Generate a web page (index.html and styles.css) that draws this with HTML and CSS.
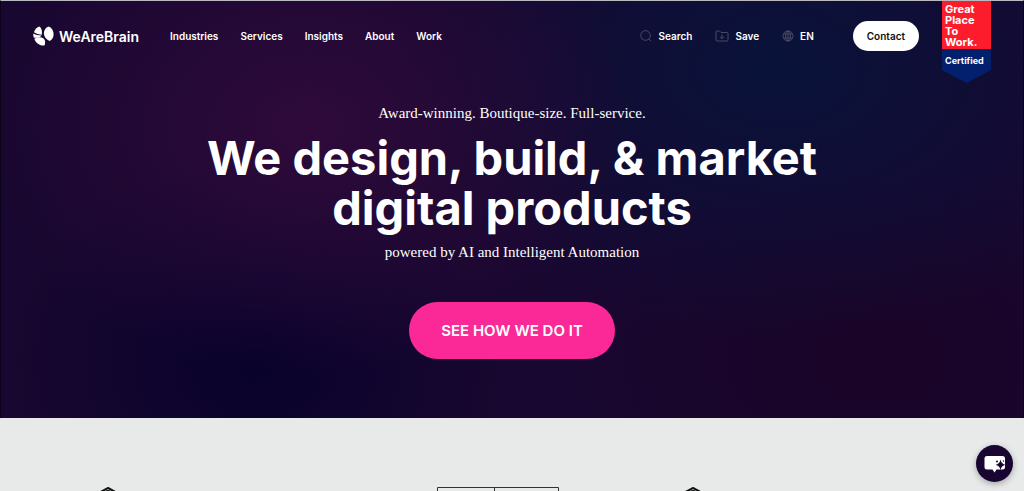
FILE: index.html
```
<!doctype html>
<html lang="en">
<head>
	<meta charset="utf-8">
	<meta name="viewport" content="width=device-width, initial-scale=1">
	<title>WeAreBrain</title>
	<link rel="stylesheet" href="styles.css">
</head>
<body>
	<div class="hero">
		<header class="header">
			<a href="#" class="logo">
				<svg width="21" height="20" viewBox="0 0 21 20" fill="#fff">
					<path d="M6.500.5C8.600 2.300 9.400 5.500 8.800 8.700C6 8.600 3 8 1 6.300C1.800 3.500 3.800 1.200 6.500.5Z"/>
					<path d="M.4 7.500C2.700 8.900 5.500 9.400 8.500 9.500C7.500 11.200 4 12.300.8 11.600C.2 10.300.1 8.900.4 7.500Z"/>
					<path d="M1.300 12.700C6 10.300 11.200 11 12 15C12.300 16.900 12 18.500 11.300 19.600C6.800 19.800 2.600 17 1.300 12.700Z"/>
					<path d="M15.700.4C19 1.800 20.700 5 20.600 8.500C20.500 11.600 19 14 16.500 15C13 13.400 10.800 10.500 10.900 7C11 4 12.800 1.300 15.700.4Z"/>
				</svg>
				<span>WeAreBrain</span>
			</a>
			<nav class="menu">
				<a href="#">Industries</a>
				<a href="#">Services</a>
				<a href="#">Insights</a>
				<a href="#">About</a>
				<a href="#">Work</a>
			</nav>
			<div class="tools">
				<button type="button" class="tool">
					<svg width="12" height="12" viewBox="0 0 12 12"><circle cx="5.500" cy="5.500" r="4.800"/><path d="M9 9l2 2"/></svg>
					Search
				</button>
				<button type="button" class="tool">
					<svg width="14" height="12" viewBox="0 0 14 12"><path d="M1 10V2Q1 1 2 1H4.500L6 2.500H12Q13 2.500 13 3.500V10Q13 11 12 11H2Q1 11 1 10ZM7 4.500V8.500M5 6.800L7 8.700L9 6.800"/></svg>
					Save
				</button>
				<button type="button" class="tool">
					<svg width="12" height="12" viewBox="0 0 12 12"><circle cx="6" cy="6" r="5"/><ellipse cx="6" cy="6" rx="2.300" ry="5"/><path d="M6 1V11M1.500 4H10.500M1.500 8H10.500"/></svg>
					EN
				</button>
			</div>
			<a href="#" class="contact">Contact</a>
			<a href="#" class="award">
				<span class="award-name">Great<br>Place<br>To<br>Work.</span>
				<span class="award-status">Certified</span>
			</a>
		</header>

		<main class="intro">
			<p>Award-winning. Boutique-size. Full-service.</p>
			<h1>We design, build, &amp; market digital products</h1>
			<p>powered by AI and Intelligent Automation</p>
			<a href="#" class="cta">SEE HOW WE DO IT</a>
		</main>
	</div>

	<section class="clients">
		<svg class="emblem" width="40" height="40" viewBox="0 0 40 40"><path d="M20 1L37 10V30L20 39L3 30V10Z"/><circle cx="20" cy="7" r="3"/></svg>
		<svg class="plate" width="122" height="40" viewBox="0 0 122 40"><path d="M.5 .5H121.500V39.500H.5ZM57.500 .5V39.500"/></svg>
		<svg class="emblem" width="40" height="40" viewBox="0 0 40 40"><path d="M20 1L37 10V30L20 39L3 30V10Z"/><circle cx="20" cy="7" r="3"/></svg>
	</section>

	<button type="button" class="chat" aria-label="Chat">
		<svg width="24" height="20" viewBox="0 0 24 20">
			<path fill="#fff" d="M4 2H19.500Q22 2 22 4.500V13Q22 15.500 19.500 15.500H13.500L11.500 18.500L9.500 15.500H4Q1.500 15.500 1.500 13V4.500Q1.500 2 4 2Z"/>
			<path fill="#190532" d="M17.500 5.500Q18.300 10 22.500 10.800Q18.300 11.600 17.500 16Q16.700 11.600 12.500 10.800Q16.700 10 17.500 5.500Z"/>
			<circle cx="14" cy="7.500" r="1" fill="#190532"/>
			<circle cx="20.500" cy="7" r=".7" fill="#190532"/>
		</svg>
	</button>
</body>
</html>
```
FILE: styles.css
```
* {
	box-sizing: border-box;
}

body {
	margin: 0;
	height: 100vh;
	display: flex;
	flex-direction: column;
	overflow: hidden;
	background: #e8eae9;
	color: #fff;
	font-family: Inter, "Liberation Sans", sans-serif;
	font-size: 10px;
}

a {
	color: inherit;
	text-decoration: none;
}

button {
	padding: 0;
	border: 0;
	background: none;
	color: inherit;
	font: inherit;
}

.hero {
	flex: none;
	padding-bottom: 59px;
	border: 1px solid #0b0418;
	border-width: 1px 1px 0;
	border-top-color: #b9b9bf;
	background:
		radial-gradient(ellipse 32% 60% at 30% 30%, #2e0a3a, transparent),
		radial-gradient(ellipse 38% 64% at 76% 16%, #09133a, transparent),
		radial-gradient(ellipse 24% 50% at 25% 86%, #08022b, transparent),
		radial-gradient(ellipse 30% 50% at 86% 86%, #1a0427, transparent),
		#180730;
}

.header {
	display: flex;
	align-items: center;
	height: 70px;
	padding: 0 32px;
	font-weight: 600;
}

.logo {
	display: flex;
	align-items: center;
	gap: 5px;
	width: 137px;
	font-size: 14px;
}

.menu {
	display: flex;
	gap: 22px;
}

.tools {
	display: flex;
	gap: 23px;
	margin-left: auto;
}

.tool {
	display: flex;
	align-items: center;
	gap: 6px;
}

.tool svg {
	fill: none;
	stroke: #4b4966;
}

.contact {
	margin: 0 23px 0 39px;
	padding: 0 14px;
	border-radius: 15px;
	background: #fff;
	color: #111;
	line-height: 30px;
}

.award {
	align-self: flex-start;
	flex: none;
	width: 49px;
	font-weight: 700;
}

.award-name,
.award-status {
	display: block;
	padding-left: 3px;
}

.award-name {
	height: 48px;
	padding-top: 3px;
	background: #fd1c2c;
	font-size: 11px;
	line-height: 11px;
}

.award-status {
	height: 34px;
	background: #03206e;
	clip-path: polygon(0 0, 100% 0, 100% 62%, 50% 100%, 0 62%);
	font-size: 9px;
	line-height: 24px;
}

.intro {
	display: flex;
	flex-direction: column;
	align-items: center;
	padding: 32px 24px 0;
	text-align: center;
}

.intro p {
	margin: 0;
	font-family: "Liberation Serif", serif;
	font-size: 15px;
	line-height: 20px;
}

.intro h1 {
	max-width: 680px;
	margin: 10px 0 9px;
	font-size: 47px;
	font-weight: 700;
	line-height: 50px;
}

.cta {
	margin-top: 40px;
	padding: 0 32px;
	border-radius: 29px;
	background: #fb2898;
	font-size: 15px;
	font-weight: 600;
	line-height: 57px;
}

.clients {
	flex: 1;
	display: grid;
	grid-template-columns: repeat(5, 1fr);
	justify-items: center;
	overflow: hidden;
	padding: 69px 39px 0 10px;
}

.clients svg {
	fill: none;
	stroke: #333;
}

.clients .emblem {
	fill: #fff;
	stroke: #111;
	stroke-width: 2;
}

.clients .plate {
	grid-column: 3;
}

.chat {
	position: fixed;
	right: 11px;
	bottom: 9px;
	display: flex;
	align-items: center;
	justify-content: center;
	width: 37px;
	height: 37px;
	border-radius: 50%;
	background: #190532;
	box-shadow: 0 2px 6px rgba(0, 0, 0, .3);
}
```
